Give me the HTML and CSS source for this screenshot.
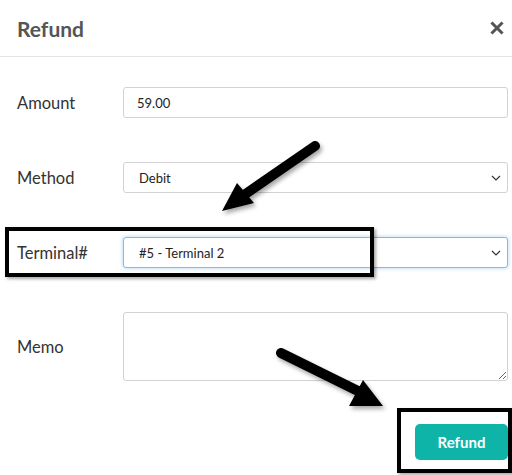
FILE: index.html
```html
<!DOCTYPE html>
<html>
<head>
<meta charset="utf-8">
<link rel="stylesheet" href="styles.css">
</head>
<body>
<div class="modal">
  <div class="header">
    <h1 class="title">Refund</h1>
    <button class="close" aria-label="Close">
      <svg width="14" height="14" viewBox="0 0 14 14"><path d="M2.5 2.5 L11.5 11.5 M11.5 2.5 L2.5 11.5" stroke="#555" stroke-width="3" stroke-linecap="square"/></svg>
    </button>
  </div>
  <div class="form">
    <label class="label">Amount</label>
    <input class="field" type="text" value="59.00">

    <label class="label">Method</label>
    <div class="select-wrap">
      <select class="field select"><option>Debit</option></select>
      <svg class="chev" width="10" height="6" viewBox="0 0 10 6"><path d="M1 1 L5 5 L9 1" fill="none" stroke="#333" stroke-width="1.2"/></svg>
    </div>

    <label class="label">Terminal#</label>
    <div class="select-wrap">
      <select class="field select focus"><option>#5 - Terminal 2</option></select>
      <svg class="chev" width="10" height="6" viewBox="0 0 10 6"><path d="M1 1 L5 5 L9 1" fill="none" stroke="#333" stroke-width="1.2"/></svg>
    </div>

    <label class="label">Memo</label>
    <textarea class="field memo"></textarea>
  </div>
  <div class="footer">
    <button class="btn">Refund</button>
  </div>
</div>

<div class="annot box1"></div>
<div class="annot box2"></div>
<svg class="arrows" width="512" height="475" viewBox="0 0 512 475">
  <g class="arrow">
    <line x1="315" y1="146" x2="244" y2="195" stroke="#000" stroke-width="10" stroke-linecap="round"/>
    <polygon points="237,183 254,203 222,211" fill="#000"/>
  </g>
  <g class="arrow">
    <line x1="281" y1="353" x2="358" y2="391" stroke="#000" stroke-width="10" stroke-linecap="round"/>
    <polygon points="363,380 383,406 349,406" fill="#000"/>
  </g>
</svg>
</body>
</html>
```

FILE: styles.css
```css
html, body {
  margin: 0;
  padding: 0;
  background: #fff;
}
body {
  font-family: Lato, "Open Sans", sans-serif;
  color: #333;
  width: 512px;
  height: 475px;
  overflow: hidden;
  position: relative;
}
.header {
  height: 57px;
  border-bottom: 1px solid #e3e3e3;
  display: flex;
  align-items: center;
  justify-content: space-between;
  padding: 0 8px 0 17px;
  box-sizing: border-box;
}
.title {
  margin: 0;
  font-size: 21px;
  font-weight: 700;
  color: #555;
  padding-top: 1px;
}
.close {
  border: 0;
  background: none;
  padding: 0;
  width: 14px;
  height: 14px;
  display: flex;
}
.form {
  display: grid;
  grid-template-columns: 106px 1fr;
  row-gap: 44px;
  align-items: center;
  padding: 30px 4px 0 17px;
}
.label {
  font-size: 16.5px;
  color: #333;
}
.field {
  box-sizing: border-box;
  width: 100%;
  height: 31px;
  border: 1px solid #d2d2d2;
  border-radius: 3px;
  padding: 0 13px;
  font-family: Lato, sans-serif;
  font-size: 13px;
  color: #222;
  background: #fff;
  outline: none;
  margin: 0;
}
.select-wrap {
  position: relative;
}
.select {
  appearance: none;
  -webkit-appearance: none;
  padding-left: 15px;
}
.select.focus {
  border-color: #7fbcee;
  box-shadow: 0 0 4px rgba(102, 175, 233, 0.55);
}
.chev {
  position: absolute;
  right: 7px;
  top: 13px;
  pointer-events: none;
}
.memo {
  height: 69px;
  resize: vertical;
  padding: 6px 13px;
}
.footer {
  display: flex;
  justify-content: flex-end;
  padding: 43px 4px 0 0;
}
.btn {
  width: 93px;
  height: 36px;
  border: 0;
  border-radius: 5px;
  background: #0fb4a8;
  color: #fff;
  font-family: Lato, sans-serif;
  font-weight: 700;
  font-size: 15px;
}
.annot {
  position: absolute;
  border: 4px solid #000;
  box-sizing: border-box;
  box-shadow: 2px 2px 3px rgba(0, 0, 0, 0.35);
}
.box1 {
  left: 5px;
  top: 227px;
  width: 369px;
  height: 50px;
}
.box2 {
  left: 397px;
  top: 408px;
  width: 115px;
  height: 65px;
}
.arrows {
  position: absolute;
  left: 0;
  top: 0;
  pointer-events: none;
}
.arrow {
  filter: drop-shadow(2px 3px 2px rgba(0, 0, 0, 0.35));
}
```
